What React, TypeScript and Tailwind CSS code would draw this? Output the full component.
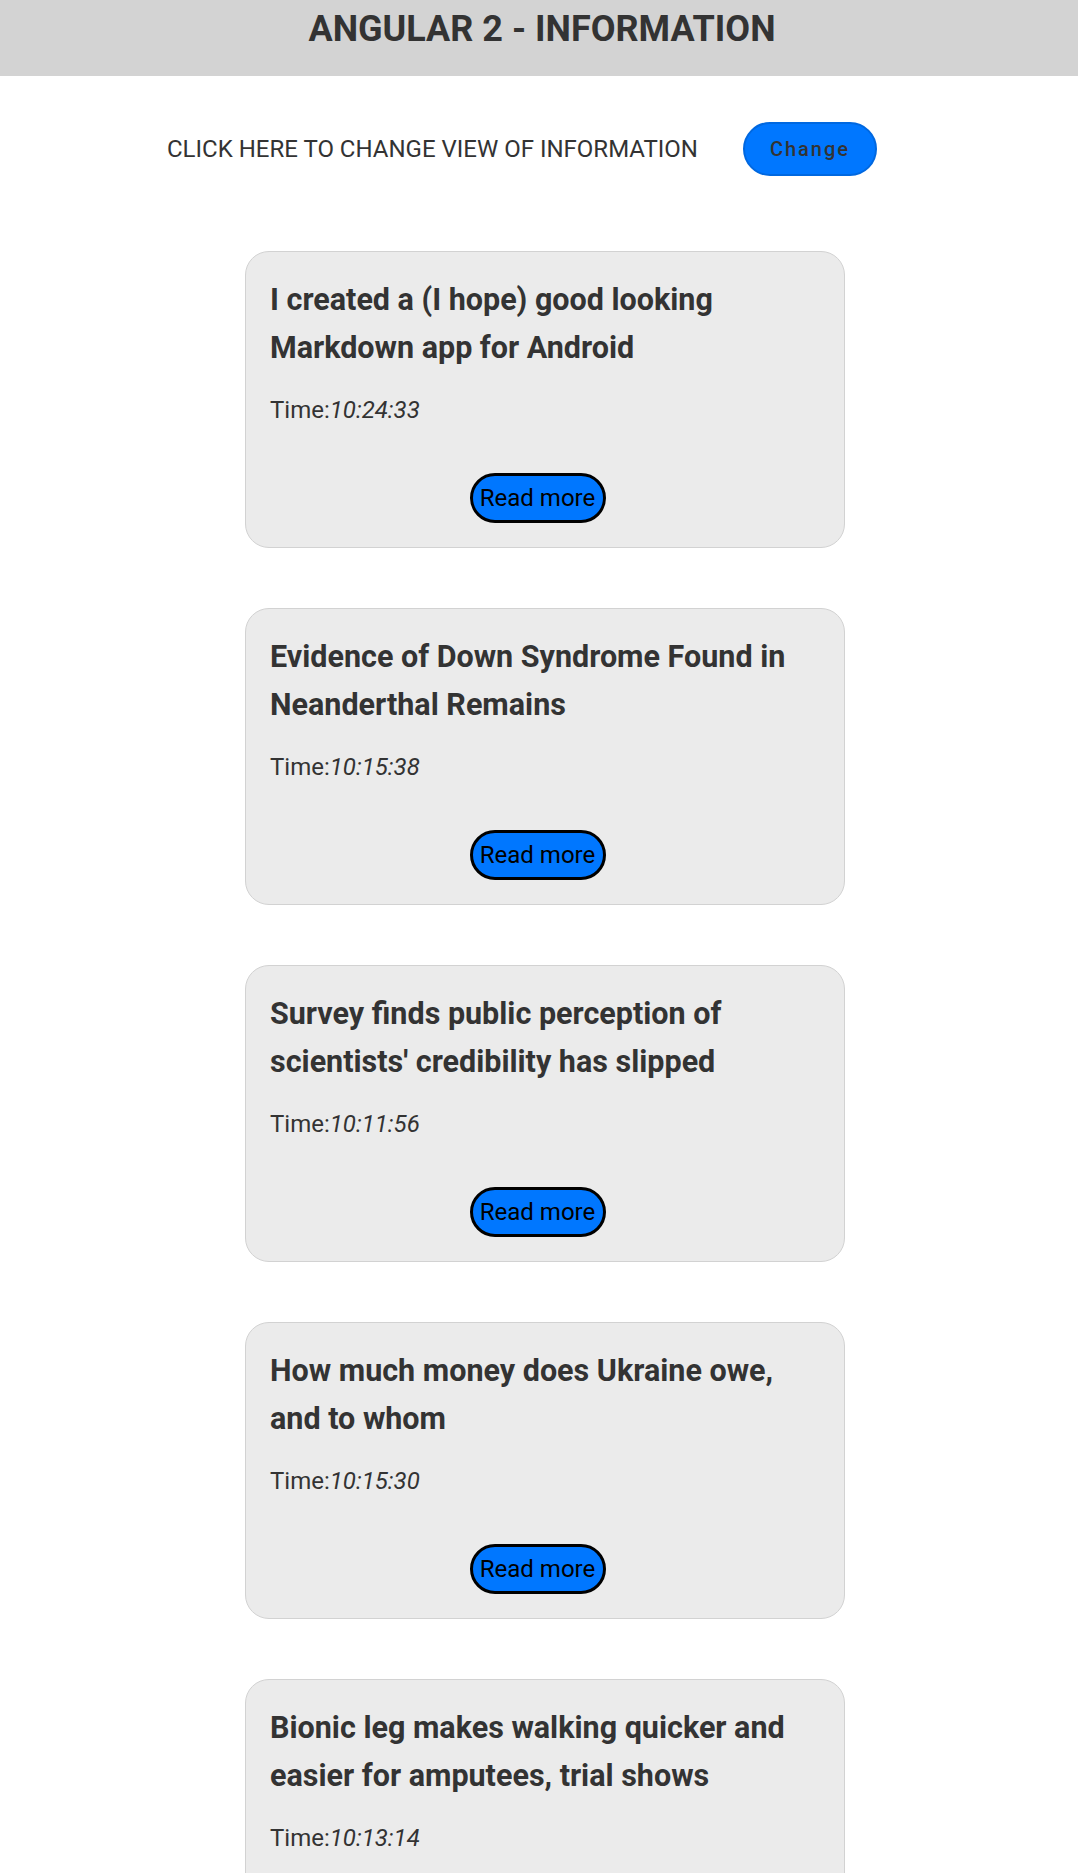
import { useState } from "react";

const news = [
  { title: "I created a (I hope) good looking Markdown app for Android", time: "10:24:33" },
  { title: "Evidence of Down Syndrome Found in Neanderthal Remains", time: "10:15:38" },
  { title: "Survey finds public perception of scientists' credibility has slipped", time: "10:11:56" },
  { title: "How much money does Ukraine owe, and to whom", time: "10:15:30" },
  { title: "Bionic leg makes walking quicker and easier for amputees, trial shows", time: "10:13:14" },
];

export default function App() {
  const [view, setView] = useState<boolean>(false);

  return (
    <div className="min-h-screen bg-white text-[#333] font-['Roboto',sans-serif] text-[24px]">
      <header className="h-[76px] bg-[#d3d3d3] pt-[8px] pl-[6px]">
        <h1 className="text-center text-[36px] font-bold leading-[42px]">ANGULAR 2 - INFORMATION</h1>
      </header>

      <div className="mt-[46px] flex items-center pl-[167px]">
        <p className="leading-[28px]">CLICK HERE TO CHANGE VIEW OF INFORMATION</p>
        <button
          className="ml-[45px] h-[54px] w-[134px] rounded-full border-2 border-[#0068e0] bg-[#0077ff] text-[20px] font-medium tracking-[2px] text-[#333]"
          onClick={() => setView((v) => !v)}
        >
          Change
        </button>
      </div>

      <div className="mt-[75px] flex flex-col gap-[60px] pb-[60px]">
        {news.map((el, i) => (
          <div
            key={i}
            className="ml-[245px] w-[600px] rounded-[24px] border border-[#d2d2d2] bg-[#ebebeb] p-[24px]"
          >
            <h2 className="text-[30.5px] font-bold leading-[48px]">{el.title}</h2>
            <p className="mt-[20px] leading-[36px]">
              Time:<em>{el.time}</em>
            </p>
            <div className="mt-[45px] flex justify-center pr-[15px]">
              <button className="h-[50px] w-[136px] rounded-full border-[3px] border-black bg-[#0077ff] text-[24px] leading-none text-black">
                Read more
              </button>
            </div>
          </div>
        ))}
      </div>
      {view && null}
    </div>
  );
}
